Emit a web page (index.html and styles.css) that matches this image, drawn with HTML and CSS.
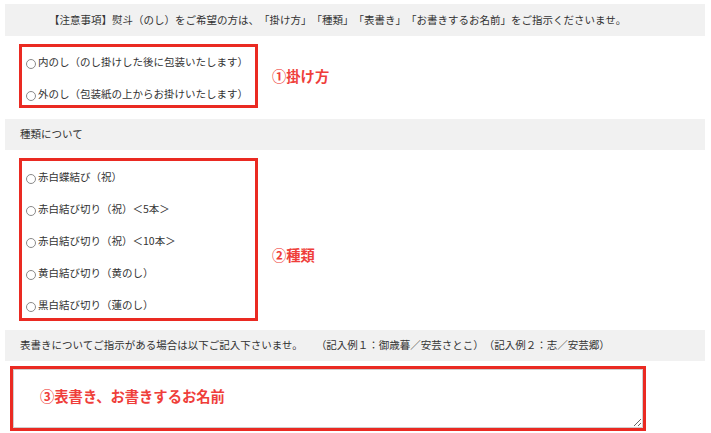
FILE: index.html
```html
<!DOCTYPE html>
<html lang="ja">
<head>
<meta charset="utf-8">
<link rel="stylesheet" href="styles.css">
</head>
<body>
<div class="page">
  <div class="bar bar-top">【注意事項】熨斗（のし）をご希望の方は、「掛け方」「種類」「表書き」「お書きするお名前」をご指示くださいませ。</div>

  <div class="section section-1">
    <div class="group group-1">
      <label class="opt"><input type="radio" name="kake"><span>内のし（のし掛けした後に包装いたします）</span></label>
      <label class="opt"><input type="radio" name="kake"><span>外のし（包装紙の上からお掛けいたします）</span></label>
    </div>
    <div class="note">①掛け方</div>
  </div>

  <div class="bar bar-2">種類について</div>

  <div class="section section-2">
    <div class="group group-2">
      <label class="opt"><input type="radio" name="kind"><span>赤白蝶結び（祝）</span></label>
      <label class="opt"><input type="radio" name="kind"><span>赤白結び切り（祝）＜5本＞</span></label>
      <label class="opt"><input type="radio" name="kind"><span>赤白結び切り（祝）＜10本＞</span></label>
      <label class="opt"><input type="radio" name="kind"><span>黄白結び切り（黄のし）</span></label>
      <label class="opt"><input type="radio" name="kind"><span>黒白結び切り（蓮のし）</span></label>
    </div>
    <div class="note note-2">②種類</div>
  </div>

  <div class="bar bar-3">表書きについてご指示がある場合は以下ご記入下さいませ。<span class="sp"></span>（記入例１：御歳暮／安芸さとこ）（記入例２：志／安芸郷）</div>

  <div class="textbox">
    <textarea class="ta" placeholder="③表書き、お書きするお名前"></textarea>
  </div>
</div>
</body>
</html>
```

FILE: styles.css
```css
html, body {
  margin: 0;
  padding: 0;
  background: #ffffff;
}

body {
  font-family: "Noto Sans CJK JP", "Noto Sans", sans-serif;
  color: #333333;
  font-size: 10.5px;
  text-spacing-trim: space-all;
}

.page {
  padding: 4px 6px 0 5px;
  width: 700px;
}

.bar {
  background: #f1f1f1;
  height: 31px;
  display: flex;
  align-items: center;
  padding-left: 15px;
  line-height: 1;
  white-space: nowrap;
}

.bar-top {
  height: 32px;
  padding-left: 44px;
}

.sp {
  display: inline-block;
  width: 13px;
}

.section {
  display: flex;
  align-items: center;
}

.section-1 {
  margin: 8px 0 11px 14px;
}

.section-2 {
  margin: 8px 0 9px 14px;
}

.group {
  box-sizing: border-box;
  width: 239px;
  border: 3px solid #ea2a22;
  display: flex;
  flex-direction: column;
  gap: 12px;
}

.group-1 {
  padding: 5px 0 1px 0;
}

.group-2 {
  padding: 6px 0 3px 0;
}

.opt {
  display: flex;
  align-items: center;
  height: 20px;
  line-height: 20px;
  white-space: nowrap;
}

.opt input {
  appearance: none;
  -webkit-appearance: none;
  box-sizing: border-box;
  width: 10px;
  height: 10px;
  border: 1px solid #8a8a8a;
  border-radius: 50%;
  background: #fff;
  margin: 3px 2px 0 4px;
  flex: none;
}

.note {
  margin-left: 14px;
  color: #ef3e3a;
  font-size: 14.3px;
  font-weight: bold;
  line-height: 20px;
}

.note-2 {
  margin-top: 30px;
}

.textbox {
  box-sizing: border-box;
  margin: 5px 0 0 5px;
  width: 636px;
  height: 65px;
  border: 3px solid #ea2a22;
}

.ta {
  display: block;
  box-sizing: border-box;
  width: 100%;
  height: 100%;
  margin: 0;
  border: 1px solid #cfcfcf;
  padding: 16px 10px 0 26px;
  font-family: "Noto Sans CJK JP", "Noto Sans", sans-serif;
  font-size: 14.3px;
  line-height: 20px;
  color: #333;
  background: #fff;
  outline: none;
  text-spacing-trim: space-all;
}

.ta::placeholder {
  color: #ef3e3a;
  font-weight: bold;
  opacity: 1;
}
```
